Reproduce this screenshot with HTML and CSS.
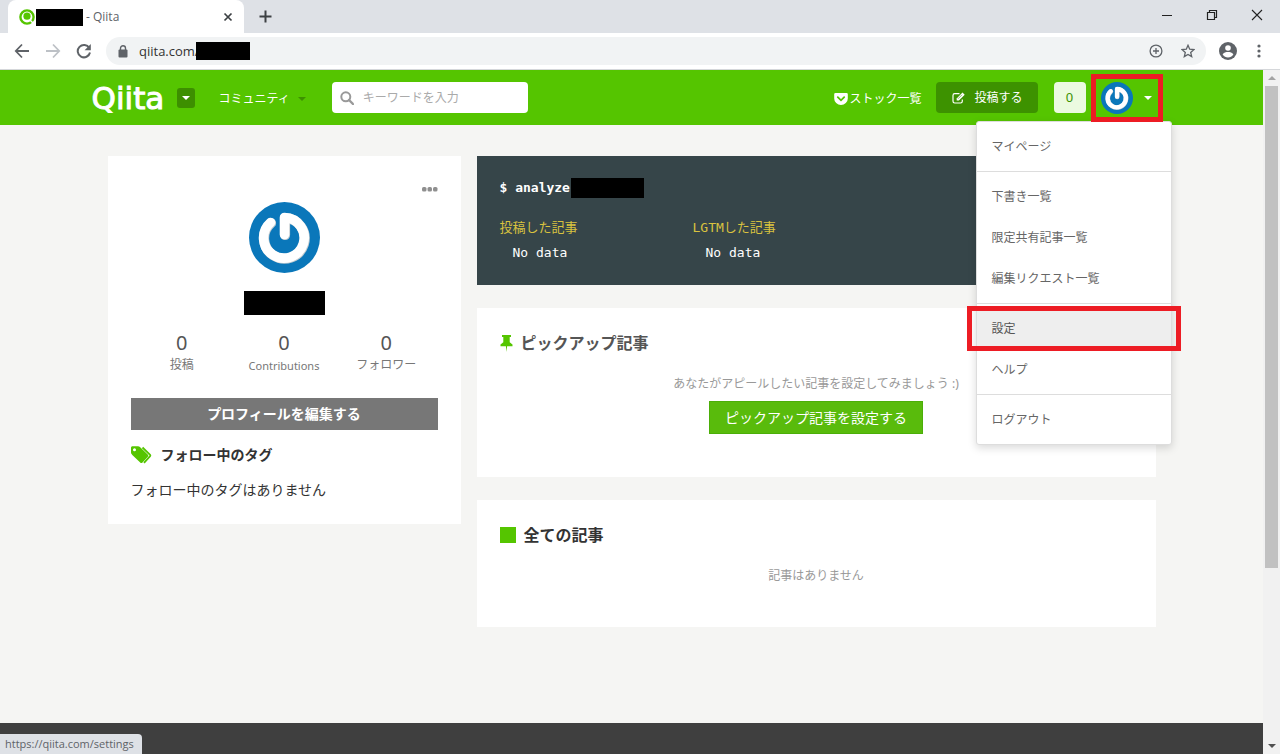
FILE: index.html
```html
<!DOCTYPE html>
<html lang="ja">
<head>
<meta charset="utf-8">
<title>Qiita</title>
<link rel="stylesheet" href="styles.css">
</head>
<body>
<svg class="defs" aria-hidden="true">
  <symbol id="avatar" viewBox="0 0 71 71">
    <circle cx="35.5" cy="35.5" r="35.5" fill="#0a77ba"/>
    <path d="M35.500 32.500V15.500A20.300 20.300 0 1 1 21.500 20.500" transform="translate(.6 .6)" fill="none" stroke="#c3ccd1" stroke-width="10" stroke-linecap="round" stroke-linejoin="round"/>
    <path d="M35.500 32.500V15.500A20.300 20.300 0 1 1 21.500 20.500" fill="none" stroke="#fff" stroke-width="9.600" stroke-linecap="round" stroke-linejoin="round"/>
  </symbol>
</svg>

<div class="tabstrip">
  <div class="tab">
    <svg class="favicon" viewBox="0 0 16 16"><circle cx="8" cy="8" r="6.600" fill="#fff" stroke="#55c500" stroke-width="2.400"/><circle cx="8" cy="7.200" r="3.600" fill="#55c500"/><path d="M11 11l3 3" stroke="#fff" stroke-width="1.500"/></svg>
    <span class="redact redact-tab"></span>
    <span class="tab-title">- Qiita</span>
    <button class="plain" aria-label="タブを閉じる"><svg width="10" height="10" viewBox="0 0 10 10"><path d="M1.500 1.500l7 7M8.500 1.500l-7 7" stroke="#3c4043" stroke-width="1.700"/></svg></button>
  </div>
  <button class="plain new-tab" aria-label="新しいタブ"><svg width="13" height="13" viewBox="0 0 13 13"><path d="M6.500 .5v12M.5 6.500h12" stroke="#3c4043" stroke-width="2"/></svg></button>
  <div class="window-controls">
    <button class="plain" aria-label="最小化"><svg width="12" height="12" viewBox="0 0 12 12"><path d="M1 6.500h10" stroke="#222"/></svg></button>
    <button class="plain" aria-label="元に戻す"><svg width="12" height="12" viewBox="0 0 12 12"><path d="M1.500 3.500h7v7h-7zM3.500 3.500v-2h7v7h-2" fill="none" stroke="#222" stroke-width="1.200"/></svg></button>
    <button class="plain" aria-label="閉じる"><svg width="12" height="12" viewBox="0 0 12 12"><path d="M1 1l10 10M11 1L1 11" stroke="#222" stroke-width="1.100"/></svg></button>
  </div>
</div>

<div class="toolbar">
  <div class="nav">
    <button class="plain" aria-label="戻る"><svg width="16" height="16" viewBox="0 0 16 16"><path d="M15 8H2M8 1.500L1.800 8 8 14.500" fill="none" stroke="#5f6368" stroke-width="1.800"/></svg></button>
    <button class="plain" aria-label="進む"><svg width="16" height="16" viewBox="0 0 16 16"><path d="M1 8h13M8 1.500L14.200 8 8 14.500" fill="none" stroke="#bdc1c6" stroke-width="1.800"/></svg></button>
    <button class="plain" aria-label="再読み込み"><svg width="16" height="16" viewBox="0 0 16 16"><path d="M13.300 5A6.200 6.200 0 1 0 14 9.500" fill="none" stroke="#5f6368" stroke-width="2"/><path d="M14.800 1v6.200H8.600z" fill="#5f6368"/></svg></button>
  </div>
  <div class="omnibox">
    <svg width="10" height="13" viewBox="0 0 10 13"><rect x=".5" y="4.500" width="9" height="8" rx="1" fill="#5f6368"/><path d="M2.500 5V3.300a2.500 2.500 0 0 1 5 0V5" fill="none" stroke="#5f6368" stroke-width="1.400"/></svg>
    <span class="url">qiita.com/</span><span class="redact redact-url"></span>
    <div class="omnibox-actions">
      <button class="plain" aria-label="ズーム"><svg width="14" height="14" viewBox="0 0 14 14"><circle cx="7" cy="7" r="5.900" fill="none" stroke="#5f6368" stroke-width="1.300"/><path d="M7 4v6M4 7h6" stroke="#5f6368" stroke-width="1.300"/></svg></button>
      <button class="plain" aria-label="ブックマーク"><svg width="14" height="14" viewBox="0 0 14 14"><path d="M7 1.300l1.700 3.900 4.200.4-3.200 2.800 1 4.200L7 10.400l-3.700 2.200 1-4.200L1.100 5.600l4.200-.4z" fill="none" stroke="#5f6368" stroke-width="1.300"/></svg></button>
    </div>
  </div>
  <button class="plain" aria-label="ユーザー"><svg width="18" height="18" viewBox="0 0 18 18"><circle cx="9" cy="9" r="9" fill="#5f6368"/><circle cx="9" cy="6" r="2.800" fill="#fff"/><path d="M3.600 12.600c1-2 3.400-2.600 5.400-2.600s4.400.6 5.400 2.600c-1.300 1.900-3.300 2.900-5.400 2.900s-4.100-1-5.400-2.900z" fill="#fff"/></svg></button>
  <button class="plain more" aria-label="メニュー"><svg width="4" height="14" viewBox="0 0 4 14"><g fill="#5f6368"><circle cx="2" cy="2" r="1.600"/><circle cx="2" cy="7" r="1.600"/><circle cx="2" cy="12" r="1.600"/></g></svg></button>
</div>

<div class="viewport">
  <div class="page">
    <header class="site-header">
      <div class="header-inner">
        <a class="logo" href="#">Qiita</a>
        <button class="logo-menu" aria-label="サービス"><span class="caret"></span></button>
        <a class="community" href="#">コミュニティ<span class="caret caret-dark"></span></a>
        <label class="search">
          <svg width="14" height="14" viewBox="0 0 14 14"><circle cx="5.800" cy="5.800" r="4.500" fill="none" stroke="#999" stroke-width="2"/><path d="M9 9l4 4" stroke="#999" stroke-width="2.400" stroke-linecap="round"/></svg>
          <input type="text" placeholder="キーワードを入力" aria-label="キーワードを入力">
        </label>
        <div class="header-right">
          <a class="stock" href="#"><svg width="14" height="12" viewBox="0 0 14 12"><path d="M1.500 0h11A1.300 1.300 0 0 1 13.800 1.300V5.500a6.800 6.500 0 0 1-13.600 0V1.300A1.300 1.300 0 0 1 1.500 0z" fill="#fff"/><path d="M3.800 4.200L7 7.300l3.200-3.100" fill="none" stroke="#55c500" stroke-width="1.800" stroke-linecap="round"/></svg>ストック一覧</a>
          <a class="post" href="#"><svg width="13" height="12" viewBox="0 0 13 12"><path d="M7.500 1.700H2.700A1.700 1.700 0 0 0 1 3.400v5.900A1.700 1.700 0 0 0 2.700 11h5.900a1.700 1.700 0 0 0 1.700-1.700V7.500" fill="none" stroke="#fff" stroke-width="1.200"/><path d="M4.700 8.600V6.400L10.500.6l2.200 2.200-5.800 5.800z" fill="#fff"/><path d="M6 6.800L10 2.800" stroke="#3d9200" stroke-width=".6"/></svg>投稿する</a>
          <a class="count" href="#">0</a>
          <div class="user">
            <button class="plain user-toggle" aria-label="ユーザーメニュー"><svg width="32" height="32"><use href="#avatar"/></svg><span class="caret"></span></button>
            <nav class="menu">
              <ul><li><a href="#">マイページ</a></li></ul>
              <ul><li><a href="#">下書き一覧</a></li><li><a href="#">限定共有記事一覧</a></li><li><a href="#">編集リクエスト一覧</a></li></ul>
              <ul><li class="active"><a href="#">設定</a></li><li><a href="#">ヘルプ</a></li></ul>
              <ul><li><a href="#">ログアウト</a></li></ul>
            </nav>
          </div>
        </div>
      </div>
    </header>

    <main class="content">
      <aside class="card profile">
        <button class="plain dots" aria-label="その他"><svg width="16" height="6" viewBox="0 0 16 6"><g fill="#8f8f8f"><rect y="1" width="4.500" height="4.500" rx="1.600"/><rect x="5.500" y="1" width="4.500" height="4.500" rx="1.600"/><rect x="11" y="1" width="4.500" height="4.500" rx="1.600"/></g></svg></button>
        <svg class="profile-avatar" width="71" height="71"><use href="#avatar"/></svg>
        <span class="redact redact-name"></span>
        <div class="stats">
          <a href="#"><span class="num">0</span><span>投稿</span></a>
          <a href="#"><span class="num">0</span><span class="latin">Contributions</span></a>
          <a href="#"><span class="num">0</span><span>フォロワー</span></a>
        </div>
        <a class="edit" href="#">プロフィールを編集する</a>
        <h2 class="tags-title"><svg width="22" height="18" viewBox="0 0 22 18"><path d="M11.500 1.500l7.600 7.300a1 1 0 0 1 0 1.300L13 16.800" fill="none" stroke="#55c500" stroke-width="1.800"/><path fill-rule="evenodd" d="M0 1.800C0 .8.700.3 1.500.3h5.400c.9 0 1.700.3 2.300.9l7.500 7.200c.8.800.8 1.600.1 2.400l-5.300 5.600c-.7.700-1.600.7-2.300 0L1.300 9C.6 8.300 0 7.500 0 6.600zM3.500 2.300a1.500 1.500 0 1 0 0 3 1.500 1.500 0 0 0 0-3z" fill="#55c500"/></svg>フォロー中のタグ</h2>
        <p class="tags-empty">フォロー中のタグはありません</p>
      </aside>

      <div class="column">
        <section class="terminal">
          <div class="command">$ analyze<span class="redact redact-cmd"></span></div>
          <div class="analysis">
            <div><h3>投稿した記事</h3><p>No data</p></div>
            <div><h3>LGTMした記事</h3><p>No data</p></div>
          </div>
        </section>

        <section class="card pickup">
          <h2><svg width="13" height="17" viewBox="0 0 13 17"><path d="M2 0h9v2H9.700v5.200l2.800 2.300v1.800H7.100L6.500 17l-.6-5.700H.5V9.500l2.800-2.300V2H2z" fill="#55c500"/></svg>ピックアップ記事</h2>
          <p>あなたがアピールしたい記事を設定してみましょう :)</p>
          <a class="pickup-button" href="#">ピックアップ記事を設定する</a>
        </section>

        <section class="card articles">
          <h2><span class="square"></span>全ての記事</h2>
          <p>記事はありません</p>
        </section>
      </div>
    </main>
    <footer class="site-footer"></footer>
  </div>
  <div class="scrollbar" aria-hidden="true">
    <span class="arrow arrow-up"></span>
    <div class="track"><div class="thumb"></div></div>
    <span class="arrow arrow-down"></span>
  </div>
  <div class="status">https://qiita.com/settings</div>
</div>
</body>
</html>
```
FILE: styles.css
```css
* { box-sizing: border-box; }
body {
  margin: 0;
  height: 100vh;
  display: flex;
  flex-direction: column;
  overflow: hidden;
  font: 12px/20px "Noto Sans", "Noto Sans CJK JP", sans-serif;
  color: #333;
}
a { color: inherit; text-decoration: none; }
h2, h3, p, ul { margin: 0; padding: 0; }
ul { list-style: none; }
svg { display: block; flex: none; }
.defs { position: absolute; width: 0; height: 0; }
.plain {
  display: flex;
  align-items: center;
  justify-content: center;
  margin: 0;
  padding: 0;
  border: 0;
  background: none;
}
.redact { display: block; flex: none; background: #000; }

/* Browser tabs */
.tabstrip {
  flex: none;
  display: flex;
  align-items: center;
  height: 33px;
  background: #dee1e6;
}
.tab {
  display: flex;
  align-items: center;
  width: 236px;
  height: 33px;
  margin-left: 8px;
  padding: 0 11px 0 11px;
  border-radius: 8px 8px 0 0;
  background: #fff;
}
.favicon { width: 16px; height: 16px; }
.redact-tab { width: 47px; height: 17px; margin: 2px 3px 0 1px; }
.tab-title { flex: 1; font-family: "Open Sans", sans-serif; color: #5f6368; }
.new-tab { margin-left: 15px; }
.window-controls { display: flex; gap: 33px; margin-left: auto; padding: 0 17px 4px 0; }

/* Browser toolbar */
.toolbar {
  flex: none;
  display: flex;
  align-items: center;
  height: 37px;
  padding: 0 19px 0 14px;
  border-bottom: 1px solid #d5d7da;
  background: #fff;
}
.nav { display: flex; gap: 15px; margin-right: 14px; }
.omnibox {
  flex: 1;
  display: flex;
  align-items: center;
  height: 28px;
  margin-right: 13px;
  padding: 0 11px 0 12px;
  border-radius: 14px;
  background: #f1f3f4;
}
.url { margin-left: 11px; font: 13px/20px "Open Sans", sans-serif; }
.redact-url { width: 54px; height: 18px; margin-left: -4px; }
.omnibox-actions { display: flex; gap: 18px; margin-left: auto; }
.more { margin-left: 20px; }

/* Viewport */
.viewport { position: relative; flex: 1; min-height: 0; display: flex; }
.page {
  flex: 1;
  display: flex;
  flex-direction: column;
  background: #f5f5f3;
}
.scrollbar {
  display: flex;
  flex-direction: column;
  align-items: center;
  width: 17px;
  background: #f1f1f1;
}
.track { flex: 1; width: 13px; }
.thumb { height: 74%; background: #c1c1c1; }
.arrow { border: 4px solid transparent; }
.arrow-up { margin: 2px 0 6px; border-bottom-color: #a3a3a3; }
.arrow-down { margin: 6px 0 2px; border-top-color: #505050; }
.status {
  position: absolute;
  left: 0;
  bottom: 0;
  padding: 0 8px 0 5px;
  border-radius: 0 4px 0 0;
  background: #dee1e6;
  color: #5f6368;
  font-family: "Open Sans", sans-serif;
  font-size: 11px;
}

/* Site header */
.site-header { height: 55px; background: #55c500; color: #fff; }
.header-inner {
  display: flex;
  align-items: center;
  height: 55px;
  max-width: 1080px;
  margin: 0 auto;
}
.caret {
  display: block;
  border: 4px solid transparent;
  border-top-color: #fff;
  border-bottom: 0;
}
.caret-dark { border-top-color: #3d9200; }
.logo { width: 85px; font: 31px/32px "DejaVu Sans", sans-serif; -webkit-text-stroke: 1px #fff; }
.logo-menu {
  display: flex;
  align-items: center;
  justify-content: center;
  width: 18px;
  height: 20px;
  padding: 0;
  border: 0;
  border-radius: 3px;
  background: #3d8f00;
}
.community { display: flex; align-items: center; gap: 8px; margin-left: 24px; padding-top: 3px; }
.search {
  display: flex;
  align-items: center;
  width: 196px;
  height: 31px;
  margin-left: 26px;
  padding: 0 8px;
  border-radius: 4px;
  background: #fff;
}
.search input {
  flex: 1;
  min-width: 0;
  margin-left: 9px;
  padding: 0;
  border: 0;
  outline: 0;
  font: inherit;
  background: none;
}
.search input::placeholder { color: #aaa; opacity: 1; }
.header-right { display: flex; align-items: center; margin-left: auto; }
.stock { display: flex; align-items: center; gap: 1px; padding-top: 3px; }
.post {
  display: flex;
  align-items: center;
  gap: 9px;
  height: 31px;
  margin: 0 16px 0 15px;
  padding: 0 15px 0 16px;
  border-radius: 4px;
  background: #3d9200;
}
.count {
  width: 32px;
  height: 31px;
  border-radius: 4px;
  background: #ebfae0;
  color: #3d9200;
  font-size: 13px;
  line-height: 31px;
  text-align: center;
}
.user { position: relative; margin-left: 5px; padding: 0 20px 0 10px; }
.user-toggle { gap: 11px; }
.user::after {
  content: "";
  position: absolute;
  inset: -8px 9px -8px 0;
  border: 5px solid #ed1c24;
}
.menu {
  position: absolute;
  top: 39px;
  right: 0;
  width: 196px;
  border: 1px solid #ddd;
  border-radius: 3px;
  background: #fff;
  color: #666;
  box-shadow: 0 3px 8px rgba(0, 0, 0, .15);
}
.menu ul { padding: 4px 0; }
.menu ul + ul { border-top: 1px solid #ddd; }
.menu li { position: relative; }
.menu a { display: block; padding: 0 15px; line-height: 41px; }
.menu .active { background: #eee; color: #555; }
.menu .active::after {
  content: "";
  position: absolute;
  inset: -2px -10px;
  border: 5px solid #ed1c24;
}

/* Content */
.content {
  flex: 1;
  display: grid;
  grid-template-columns: 353px 1fr;
  gap: 16px;
  align-items: start;
  width: 100%;
  max-width: 1048px;
  margin: 0 auto;
  padding-top: 31px;
}
.card { background: #fff; }
.profile {
  display: flex;
  flex-direction: column;
  align-items: center;
  padding: 30px 23px 24px;
}
.dots { align-self: flex-end; }
.profile-avatar { margin-top: 10px; }
.redact-name { width: 81px; height: 24px; margin: 18px 0 16px; }
.stats { display: grid; grid-template-columns: 1fr 1fr 1fr; width: 100%; color: #777; text-align: center; }
.stats span { display: block; }
.stats .num { font-size: 20px; line-height: 24px; color: #555; }
.stats .latin { font-size: 11px; line-height: 22px; }
.edit {
  width: 100%;
  margin-top: 21px;
  background: #777;
  color: #fff;
  font-size: 14px;
  font-weight: bold;
  line-height: 32px;
  text-align: center;
}
.tags-title {
  display: flex;
  align-items: center;
  align-self: flex-start;
  gap: 8px;
  margin-top: 15px;
  font-size: 14px;
  line-height: 20px;
}
.tags-empty { align-self: flex-start; margin-top: 15px; font-size: 14px; }
.column { display: flex; flex-direction: column; gap: 23px; }
.terminal {
  height: 129px;
  padding: 22px 23px;
  background: #364549;
  color: #fff;
  font: 13px/20px "DejaVu Sans Mono", "Noto Sans CJK JP", monospace;
}
.command { display: flex; align-items: center; font-weight: bold; }
.redact-cmd { width: 73px; height: 20px; margin-left: 1px; }
.analysis { display: flex; margin-top: 20px; }
.analysis > div { width: 193px; }
.analysis h3 { color: #d9c23f; font: inherit; }
.analysis p { margin-top: 5px; padding-left: 13px; }
.pickup, .articles { padding: 23px; }
.pickup { height: 169px; color: #555; text-align: center; }
.articles { height: 127px; text-align: center; }
.card.pickup h2, .card.articles h2 {
  display: flex;
  align-items: center;
  gap: 8px;
  font-size: 16px;
  line-height: 24px;
}
.pickup p, .articles p { margin-top: 19px; color: #999; }
.square { width: 16px; height: 16px; background: #55c500; }
.pickup-button {
  display: inline-block;
  margin-top: 7px;
  padding: 0 15px;
  border: 1px solid #4bae08;
  background: #59bb0c;
  color: #fff;
  font-size: 14px;
  line-height: 31px;
}
.site-footer { flex: none; height: 31px; background: #3f3f3f; }
```
